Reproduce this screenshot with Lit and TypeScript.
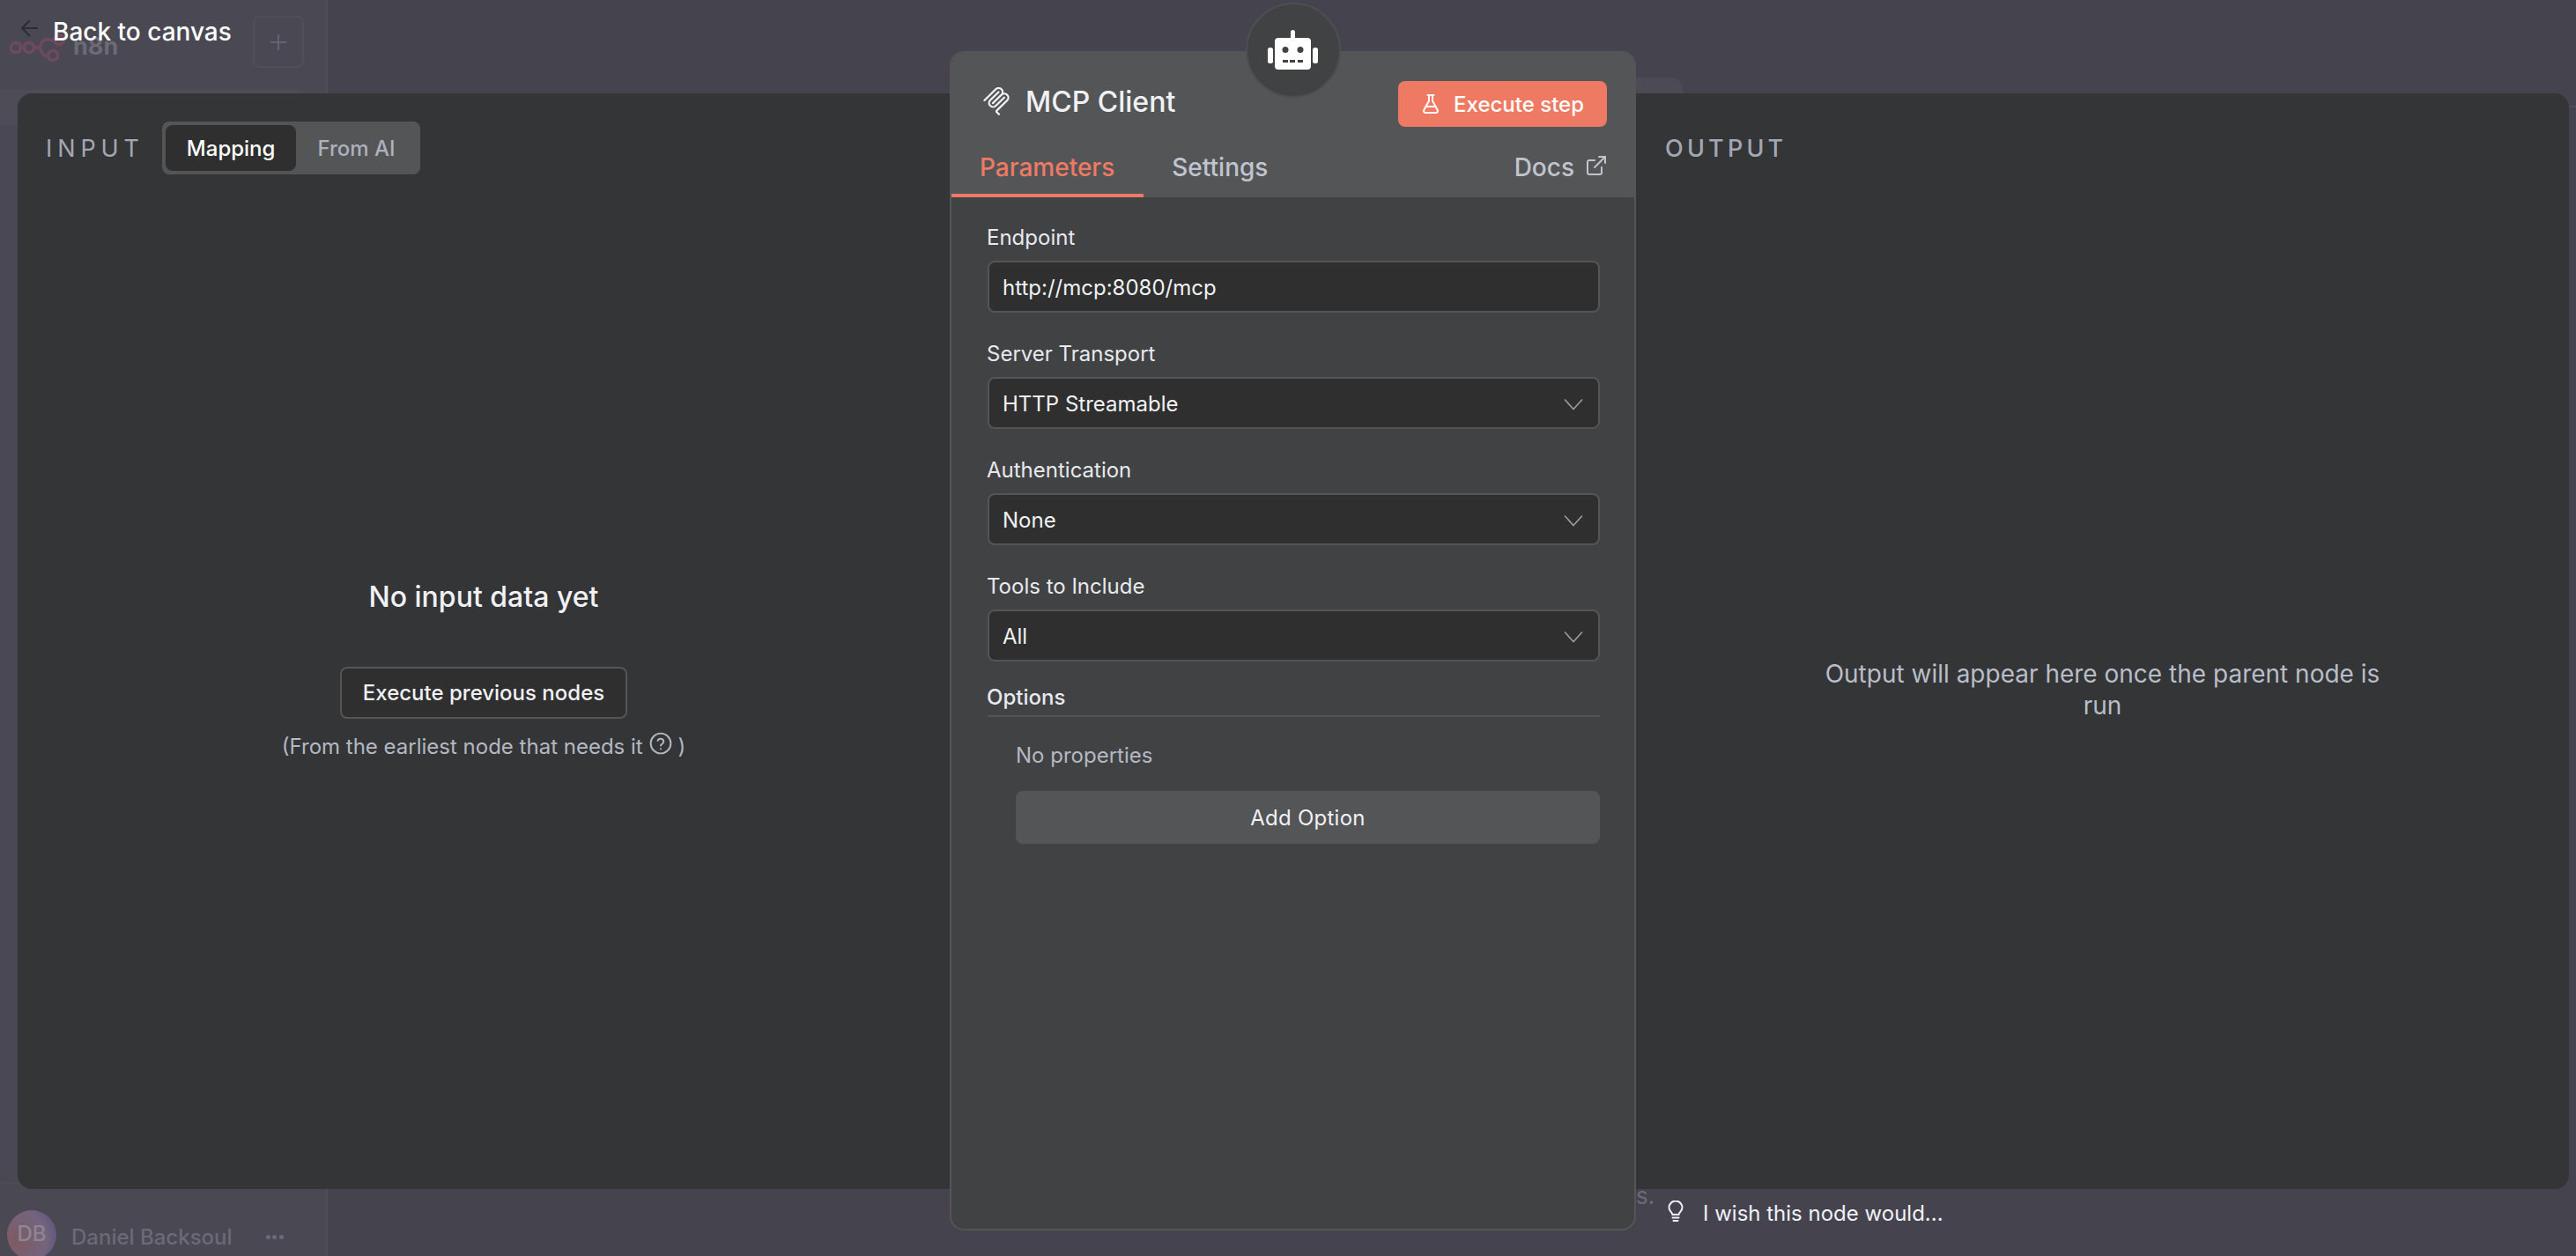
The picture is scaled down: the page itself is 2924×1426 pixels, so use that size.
import { LitElement, html, css, svg } from "lit"
import { customElement } from "lit/decorators.js"

const chevron = html`<svg class="chevron" viewBox="0 0 22 14"><path d="M1 1.5 11 12.5 21 1.5" fill="none" stroke="#9a9ca3" stroke-width="1.6"/></svg>`

const flask = svg`<path d="M14 2v6a2 2 0 0 0 .245.96l5.51 10.08A2 2 0 0 1 18 22H6a2 2 0 0 1-1.755-2.96l5.51-10.08A2 2 0 0 0 10 8V2"/><path d="M6.453 15h11.094"/><path d="M8.5 2h7"/>`

@customElement("app-root")
export class AppRoot extends LitElement {
  static styles = css`
    :host {
      display: block;
      font-family: Inter, "Noto Sans", sans-serif;
      color: #f0f1f5;
    }

    .page {
      position: relative;
      display: grid;
      grid-template-rows: 106px 1244px 76px;
      height: 1426px;
      overflow: hidden;
      background: #45434e;
    }

    /* dimmed app behind the overlay */
    .sidebar {
      position: absolute;
      inset: 0 auto 0 0;
      width: 370px;
      background: #4a4853;
      border-right: 2px solid #4f4d59;
    }
    .sidebar .logo {
      position: absolute;
      left: 10px;
      top: 38px;
      width: 66px;
      height: 34px;
    }
    .sidebar .brand {
      position: absolute;
      left: 83px;
      top: 36px;
      font-size: 27px;
      font-weight: 700;
      color: #6b6a76;
    }
    .sidebar .plus {
      position: absolute;
      left: 287px;
      top: 18px;
      width: 58px;
      height: 59px;
      box-sizing: border-box;
      border: 2px solid #504f5a;
      border-radius: 8px;
      display: flex;
      align-items: center;
      justify-content: center;
    }
    .sidebar .menu-item {
      position: absolute;
      left: 0;
      top: 102px;
      width: 348px;
      height: 40px;
      background: #4e4c57;
      border-radius: 0 12px 0 0;
    }
    .sidebar .rule {
      position: absolute;
      left: 0;
      top: 1343px;
      width: 22px;
      height: 1px;
      background: #4f4d59;
    }
    .canvas-tab {
      position: absolute;
      left: 1840px;
      top: 88px;
      width: 70px;
      height: 30px;
      background: #4c4a55;
      border-radius: 0 12px 0 0;
    }
    .edge-rule {
      position: absolute;
      right: 0;
      top: 120px;
      width: 10px;
      height: 2px;
      background: #4f4d59;
    }

    .topbar {
      position: relative;
      display: flex;
      align-items: flex-start;
      gap: 16px;
      padding: 23px 0 0 24px;
    }
    .topbar svg {
      width: 20px;
      height: 20px;
      margin-top: -1px;
    }
    .topbar span {
      font-size: 28px;
      line-height: 26px;
      font-weight: 500;
      color: #fff;
    }

    .main {
      position: relative;
      display: grid;
      grid-template-columns: 1058px 779px 1059px;
      margin: 0 8px 0 20px;
      background: #343537;
      border-radius: 16px;
    }

    .pane-head {
      display: flex;
      align-items: center;
      gap: 20px;
      height: 60px;
      padding: 32px 0 0 32px;
    }
    .pane-title {
      font-size: 27px;
      font-weight: 400;
      letter-spacing: 5.9px;
      color: #a3a7b2;
    }
    .output .pane-head {
      padding-left: 33px;
    }
    .output .pane-title {
      font-weight: 500;
      letter-spacing: 4.2px;
    }

    .toggle {
      display: flex;
      box-sizing: border-box;
      height: 60px;
      padding: 4px;
      background: #545557;
      border-radius: 8px;
      font-size: 24px;
      font-weight: 500;
      color: #adb1bc;
    }
    .toggle span {
      display: flex;
      align-items: center;
      padding: 0 24px;
      border-radius: 8px;
    }
    .toggle .on {
      background: #2e2f2e;
      color: #fff;
    }

    .empty {
      display: flex;
      flex-direction: column;
      align-items: center;
      padding-top: 460px;
    }
    .empty h2 {
      margin: 0;
      font-size: 32px;
      line-height: 40px;
      font-weight: 500;
      color: #f0f1f5;
    }
    .empty button {
      margin-top: 59px;
      height: 59px;
      padding: 0 24px;
      background: #2e2f2e;
      border: 2px solid #545557;
      border-radius: 8px;
      font: 500 24px Inter, sans-serif;
      color: #f0f1f5;
    }
    .hint {
      display: flex;
      align-items: center;
      margin-top: 16px;
      font-size: 24px;
      line-height: 32px;
      color: #b4b8c2;
      white-space: pre;
    }
    .hint svg {
      width: 26px;
      height: 26px;
      margin: -8px 0 0 7px;
    }

    .output-msg {
      display: flex;
      justify-content: center;
      padding-top: 549px;
    }
    .output-msg p {
      margin: 0;
      width: 680px;
      text-align: center;
      font-size: 28px;
      line-height: 36px;
      color: #b9bdc8;
    }

    .modal {
      position: relative;
      display: flex;
      flex-direction: column;
      margin: -48px 0 -47px;
      background: #414244;
      border: 2px solid #545557;
      border-radius: 16px;
    }
    .node-badge {
      position: absolute;
      left: 334px;
      top: -57px;
      width: 108px;
      height: 108px;
      box-sizing: border-box;
      display: flex;
      align-items: center;
      justify-content: center;
      background: #414244;
      border: 2px solid #4e4f52;
      border-radius: 50%;
    }
    .node-badge svg {
      width: 58px;
      height: 46px;
    }

    .modal-head {
      background: #545557;
      border-radius: 14px 14px 0 0;
    }
    .title-row {
      display: flex;
      justify-content: space-between;
      align-items: flex-start;
      height: 96px;
      padding: 32px 31px 0 35px;
      box-sizing: border-box;
    }
    .title {
      display: flex;
      align-items: center;
      gap: 17px;
      height: 46px;
      font-size: 32px;
      font-weight: 500;
      color: #f0f1f5;
    }
    .title svg {
      width: 32px;
      height: 32px;
    }
    .run {
      display: flex;
      align-items: center;
      gap: 14px;
      height: 52px;
      padding: 0 26px 0 25px;
      background: #ef7a64;
      border: none;
      border-radius: 8px;
      font: 500 24px Inter, sans-serif;
      color: #fff;
    }
    .run svg {
      width: 24px;
      height: 24px;
    }

    .tabs {
      display: flex;
      align-items: stretch;
      height: 68px;
      padding-right: 31px;
      font-size: 28px;
      font-weight: 500;
      color: #c0c4ce;
    }
    .tab {
      display: flex;
      align-items: center;
      padding: 4px 33px 0 32px;
      border-bottom: 4px solid transparent;
    }
    .tab.active {
      color: #ef7a64;
      border-bottom-color: #ef7a64;
    }
    .docs {
      display: flex;
      align-items: center;
      gap: 13px;
      margin-left: auto;
    }
    .docs svg {
      width: 24px;
      height: 24px;
      margin-top: -4px;
    }

    .params {
      padding: 30px 39px 0 41px;
    }
    .field {
      margin-bottom: 31px;
    }
    .field label,
    .section {
      display: block;
      font-size: 24px;
      line-height: 32px;
      color: #e8e9ee;
    }
    .field label {
      margin-left: -1px;
    }
    .control {
      display: flex;
      align-items: center;
      justify-content: space-between;
      box-sizing: border-box;
      height: 59px;
      margin-top: 10px;
      padding: 2px 17px 0 15px;
      background: #2e2f2e;
      border: 2px solid #545557;
      border-radius: 8px;
      font-size: 24px;
      color: #f0f1f5;
    }
    .chevron {
      width: 22px;
      height: 14px;
    }
    .section {
      margin-top: -6px;
      padding-bottom: 4px;
      border-bottom: 2px solid #545557;
      font-weight: 500;
      text-indent: -1px;
    }
    .collection {
      padding-left: 32px;
    }
    .collection p {
      margin: 28px 0 24px;
      font-size: 24px;
      line-height: 32px;
      color: #b4b8c2;
    }
    .collection button {
      display: block;
      width: 100%;
      height: 60px;
      background: #545557;
      border: none;
      border-radius: 8px;
      font: 400 24px Inter, sans-serif;
      letter-spacing: 0.25px;
      color: #f0f1f5;
    }

    .footer {
      position: relative;
      display: flex;
      align-items: flex-start;
    }
    .user {
      display: flex;
      align-items: center;
      width: 1857px;
      padding: 24px 0 0 8px;
      box-sizing: border-box;
      color: #6b6a76;
      font-size: 24px;
      font-weight: 500;
    }
    .user .name {
      padding-top: 4px;
    }
    .avatar {
      display: flex;
      align-items: center;
      justify-content: center;
      width: 56px;
      height: 56px;
      margin-right: 17px;
      padding-bottom: 4px;
      box-sizing: border-box;
      border-radius: 50%;
      background: radial-gradient(circle at 20% 60%, #7e5a60, #74647e 60%, #5b5480 90%);
      font-size: 24px;
      color: #8a8794;
    }
    .dots {
      display: flex;
      gap: 2.5px;
      margin-left: 38px;
      padding-top: 4px;
    }
    .dots i {
      width: 5px;
      height: 5px;
      border-radius: 50%;
      background: #6b6a76;
    }
    .tail {
      position: absolute;
      left: 1857px;
      top: -8px;
      font-size: 26px;
      color: #6b6a76;
    }
    .wish {
      display: flex;
      align-items: center;
      gap: 22px;
      padding: 12px 0 0 36px;
      font-size: 24px;
      line-height: 32px;
      color: #f0f1f5;
    }
    .wish svg {
      width: 18px;
      height: 24px;
      margin-top: -6px;
    }
  `

  _field(label: string, value: string, select = true) {
    return html`
      <div class="field">
        <label>${label}</label>
        <div class="control"><span>${value}</span>${select ? chevron : ""}</div>
      </div>
    `
  }

  render() {
    return html`
      <div class="page">
        <div class="sidebar">
          <svg class="logo" viewBox="0 0 66 34" fill="none" stroke="#6f4a5e" stroke-width="3.5">
            <circle cx="8" cy="16" r="5.5"/>
            <circle cx="23" cy="16" r="5.5"/>
            <circle cx="50" cy="25" r="5.5"/>
            <circle cx="57" cy="7" r="5.5"/>
            <path d="M13.5 16h4M28.5 16h5c4 0 3-9 8-9h10M33.5 16c4 0 3 9 8 9h3"/>
          </svg>
          <span class="brand">n8n</span>
          <div class="plus">
            <svg width="20" height="20" viewBox="0 0 20 20"><path d="M10 1v18M1 10h18" stroke="#65636f" stroke-width="2"/></svg>
          </div>
          <div class="menu-item"></div>
          <div class="rule"></div>
        </div>
        <div class="canvas-tab"></div>
        <div class="edge-rule"></div>

        <div class="topbar">
          <svg viewBox="0 0 20 20" fill="none" stroke="#2d2e30" stroke-width="2"><path d="M19 10H1M10 1 1 10l9 9"/></svg>
          <span>Back to canvas</span>
        </div>

        <div class="main">
          <section class="input">
            <div class="pane-head">
              <span class="pane-title">INPUT</span>
              <div class="toggle"><span class="on">Mapping</span><span>From AI</span></div>
            </div>
            <div class="empty">
              <h2>No input data yet</h2>
              <button>Execute previous nodes</button>
              <div class="hint">(From the earliest node that needs it<svg viewBox="0 0 24 24" fill="none" stroke="#b4b8c2" stroke-width="1.8" stroke-linecap="round"><circle cx="12" cy="12" r="10.5"/><path d="M8.8 9.2a3.2 3.2 0 0 1 6.2 1c0 2.2-3 2.6-3 4.2"/><path d="M12 17.8v.1"/></svg> )</div>
            </div>
          </section>

          <section class="modal">
            <div class="node-badge">
              <svg viewBox="0 0 58 46" fill="#fff">
                <rect x="0" y="20" width="6" height="18" rx="2.5"/>
                <rect x="51" y="20" width="6" height="18" rx="2.5"/>
                <rect x="26" y="0" width="5" height="12" rx="2.5"/>
                <path fill-rule="evenodd" d="M12 9h33a4 4 0 0 1 4 4v28a4 4 0 0 1-4 4H12a4 4 0 0 1-4-4V13a4 4 0 0 1 4-4ZM20 19a3.500 3.500 0 1 0 0 7 3.500 3.500 0 0 0 0-7ZM37 19a3.500 3.500 0 1 0 0 7 3.500 3.500 0 0 0 0-7ZM17 34v3h6v-3ZM25 34v3h6v-3ZM34 34v3h6v-3Z"/>
              </svg>
            </div>
            <div class="modal-head">
              <div class="title-row">
                <div class="title">
                  <svg viewBox="0 0 24 24" fill="#f0f1f5">
                    <path d="M15.688 2.343a2.588 2.588 0 00-3.61 0l-9.626 9.44a.863.863 0 01-1.203 0 .823.823 0 010-1.18l9.626-9.44a4.313 4.313 0 016.016 0 4.116 4.116 0 011.204 3.54 4.3 4.3 0 013.609 1.18l.05.05a4.115 4.115 0 010 5.9l-8.706 8.537a.274.274 0 000 .393l1.788 1.754a.823.823 0 010 1.18.863.863 0 01-1.203 0l-1.788-1.753a1.92 1.92 0 010-2.754l8.706-8.538a2.47 2.47 0 000-3.54l-.05-.049a2.588 2.588 0 00-3.607-.003l-7.172 7.034-.002.002-.098.097a.863.863 0 01-1.204 0 .823.823 0 010-1.18l7.273-7.133a2.47 2.47 0 00-.003-3.537z"/>
                    <path d="M14.485 4.703a.823.823 0 000-1.18.863.863 0 00-1.204 0l-7.119 6.982a4.115 4.115 0 000 5.9 4.314 4.314 0 006.016 0l7.12-6.982a.823.823 0 000-1.18.863.863 0 00-1.204 0l-7.119 6.982a2.588 2.588 0 01-3.61 0 2.47 2.47 0 010-3.54l7.12-6.982z"/>
                  </svg>
                  MCP Client
                </div>
                <button class="run">
                  <svg viewBox="0 0 24 24" fill="none" stroke="#fff" stroke-width="2" stroke-linecap="round" stroke-linejoin="round">${flask}</svg>
                  Execute step
                </button>
              </div>
              <div class="tabs">
                <div class="tab active">Parameters</div>
                <div class="tab">Settings</div>
                <div class="docs">
                  Docs
                  <svg viewBox="0 0 24 24" fill="none" stroke="#c0c4ce" stroke-width="2" stroke-linecap="round" stroke-linejoin="round"><path d="M18 14v6a2 2 0 0 1-2 2H4a2 2 0 0 1-2-2V8a2 2 0 0 1 2-2h6"/><path d="M15 2h7v7"/><path d="M10 14 22 2"/></svg>
                </div>
              </div>
            </div>
            <div class="params">
              ${this._field("Endpoint", "http://mcp:8080/mcp", false)}
              ${this._field("Server Transport", "HTTP Streamable")}
              ${this._field("Authentication", "None")}
              ${this._field("Tools to Include", "All")}
              <div class="section">Options</div>
              <div class="collection">
                <p>No properties</p>
                <button>Add Option</button>
              </div>
            </div>
          </section>

          <section class="output">
            <div class="pane-head"><span class="pane-title">OUTPUT</span></div>
            <div class="output-msg"><p>Output will appear here once the parent node is run</p></div>
          </section>
        </div>

        <div class="footer">
          <div class="user">
            <div class="avatar">DB</div>
            <span class="name">Daniel Backsoul</span>
            <div class="dots"><i></i><i></i><i></i></div>
          </div>
          <span class="tail">s.</span>
          <div class="wish">
            <svg viewBox="0 0 18 24" fill="none" stroke="#f0f1f5" stroke-width="2" stroke-linecap="round"><path d="M5.500 16c0-2-4-3.800-4-8a7.500 7.500 0 0 1 15 0c0 4.200-4 6-4 8Z"/><path d="M5.500 19.500h7M6.500 23h5"/></svg>
            I wish this node would...
          </div>
        </div>
      </div>
    `
  }
}
